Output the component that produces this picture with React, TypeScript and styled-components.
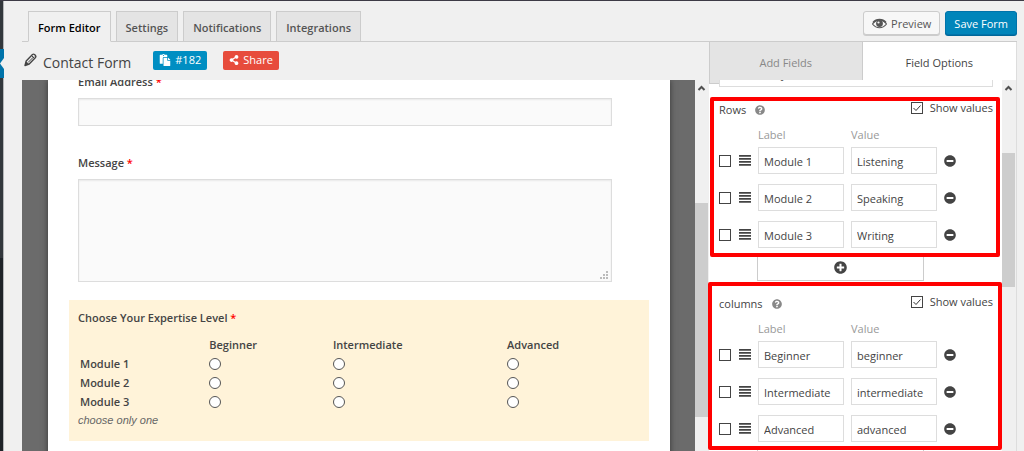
import React from "react";
import styled, { createGlobalStyle, css } from "styled-components";
import { FaShareAlt, FaMinusCircle, FaPlusCircle, FaQuestionCircle, FaPaste } from "react-icons/fa";

const Global = createGlobalStyle`
  * { box-sizing: border-box; }
  body {
    margin: 0;
    background: #f0f0f0;
    color: #444;
    font: 11px/18px "Open Sans", "Noto Sans", sans-serif;
  }
  button, input, textarea { font: inherit; color: inherit; }
`;

const Screen = styled.div`
  display: flex;
  height: 100vh;
  overflow: hidden;
  border-top: 1px solid #3d3b46;
`;

const AdminMenu = styled.div`
  flex: none;
  width: 4px;
  padding-top: 48px;
  border-right: 1px solid #b4b6b8;
  background: linear-gradient(#32373c 0 257px, #1e2328 257px);
`;

const CurrentItem = styled.svg`
  display: block;
  width: 4px;
  height: 29px;
`;

const Main = styled.main`
  flex: 1;
  min-width: 0;
  display: flex;
  flex-direction: column;
  padding: 10px 7px 0 18px;
`;

const TopBar = styled.header`
  flex: none;
  display: flex;
  align-items: flex-end;
  height: 31px;
  padding-left: 6px;
  border-bottom: 1px solid #ccc;
`;

const Tabs = styled.nav`
  display: flex;
  gap: 5px;
  margin-bottom: -1px;
  flex: 1;
`;

const Tab = styled.a<{ $active?: boolean }>`
  height: 31px;
  padding: 0 9px;
  border: 1px solid #ccc;
  background: #e4e4e4;
  color: #555;
  font-weight: 600;
  line-height: 32px;
  text-decoration: none;
  ${(p) => p.$active && css`
    background: #f0f0f0;
    border-bottom-color: #f0f0f0;
    color: #000;
  `}
`;

const Actions = styled.div`
  display: flex;
  gap: 5px;
  align-self: flex-start;
`;

const ActionButton = styled.button<{ $primary?: boolean }>`
  display: flex;
  align-items: center;
  gap: 4px;
  height: 24px;
  padding: 2px 8px 0;
  border: 1px solid #ccc;
  border-radius: 3px;
  background: #f7f7f7;
  box-shadow: 0 1px 0 #ccc;
  color: #555;
  ${(p) => p.$primary && css`
    border-color: #0073aa;
    background: #0085ba;
    box-shadow: 0 1px 0 #006799;
    color: #fff;
  `}
`;

const Workspace = styled.div`
  flex: 1;
  min-height: 0;
  display: flex;
`;

const Builder = styled.section`
  flex: 1;
  min-width: 0;
  display: flex;
  flex-direction: column;
`;

const TitleBar = styled.div`
  flex: none;
  display: flex;
  align-items: center;
  height: 38px;
`;

const Title = styled.h1`
  margin: 4px 22px 0 5px;
  font-size: 14px;
  font-weight: 400;
  line-height: 20px;
`;

const Badge = styled.button<{ $color: string }>`
  display: flex;
  align-items: center;
  gap: 4px;
  height: 19px;
  margin: -2px 16px 0 0;
  padding: 0 6px;
  border: 0;
  border-radius: 2px;
  background: ${(p) => p.$color};
  color: #fff;
`;

const ScrollArea = styled.div`
  flex: 1;
  min-height: 0;
  display: flex;
`;

const Desk = styled.div`
  flex: 1;
  min-width: 0;
  overflow: hidden;
  padding: 0 25px 0 26px;
  background: #6b6b6b;
`;

const Paper = styled.form`
  display: flow-root;
  min-height: 100%;
  padding: 0 21px 20px;
  background: #fff;
  box-shadow: 0 0 6px rgba(0, 0, 0, 0.5);
`;

const Field = styled.div<{ $selected?: boolean }>`
  padding: 9px;
  ${(p) => p.$selected && css`
    min-height: 141px;
    background: #fff3d9;
  `}
`;

const EmailField = styled(Field)`
  margin-top: -16px;
`;

const MessageField = styled(Field)`
  margin: 10px 0 9px;
`;

const FieldLabel = styled.label`
  display: block;
  font-weight: 600;
`;

const Star = styled.span`
  color: #f00;
`;

const inputLook = css`
  display: block;
  width: 95%;
  margin-top: 7px;
  border: 1px solid #ddd;
  background: #fafafa;
  box-shadow: inset 0 1px 2px rgba(0, 0, 0, 0.07);
  outline: 0;
`;

const TextInput = styled.input`
  ${inputLook}
  height: 28px;
`;

const TextBox = styled.textarea`
  ${inputLook}
  height: 103px;
  resize: vertical;
  &::-webkit-resizer {
    background:
      linear-gradient(#bbb, #bbb) 10px 5px / 2px 2px no-repeat,
      linear-gradient(#bbb, #bbb) 7px 8px / 2px 2px no-repeat,
      linear-gradient(#bbb, #bbb) 10px 8px / 2px 2px no-repeat,
      linear-gradient(#bbb, #bbb) 4px 11px / 2px 2px no-repeat,
      linear-gradient(#bbb, #bbb) 7px 11px / 2px 2px no-repeat,
      linear-gradient(#bbb, #bbb) 10px 11px / 2px 2px no-repeat;
  }
`;

const Likert = styled.table`
  width: 100%;
  margin-top: 8px;
  table-layout: fixed;
  border-collapse: collapse;
  th, td {
    height: 19px;
    padding: 0 2px;
    font-weight: 600;
    text-align: left;
    line-height: 19px;
  }
`;

const Radio = styled.input`
  appearance: none;
  display: block;
  width: 12px;
  height: 12px;
  margin: 0;
  border: 1px solid #555;
  border-radius: 50%;
  background: #fff;
`;

const Hint = styled.p`
  margin: 0;
  color: #666;
  font: italic 11px/19px "Liberation Sans", sans-serif;
`;

const Sidebar = styled.aside`
  position: relative;
  flex: none;
  width: 308px;
  display: flex;
  flex-direction: column;
  border-right: 1px solid #ddd;
  background: #fff;
`;

const SideTabs = styled.nav`
  flex: none;
  display: grid;
  grid-template-columns: 1fr 1fr;
  height: 38px;
`;

const SideTab = styled.a<{ $active?: boolean }>`
  border: solid #ccc;
  border-width: 0 1px 1px;
  background: #e4e4e4;
  color: #888;
  line-height: 41px;
  text-align: center;
  text-decoration: none;
  ${(p) => p.$active && css`
    border-color: #fff;
    background: #fff;
    color: #444;
  `}
`;

const Options = styled.div`
  flex: 1;
  min-width: 0;
  overflow: hidden;
  padding: 0 9px 0 10px;
`;

const LabelBox = styled.input`
  display: block;
  width: 100%;
  height: 27px;
  margin: -20px 0 10px;
  padding: 0 5px;
  border: 1px solid #ddd;
`;

const Group = styled.fieldset`
  min-width: 0;
  margin: 0 0 10px;
  padding: 0;
  border: 0;
`;

const GroupHead = styled.div`
  display: flex;
  align-items: center;
  gap: 9px;
  height: 26px;
`;

const ShowValues = styled.label`
  display: flex;
  align-items: center;
  gap: 7px;
  height: 22px;
  margin-left: auto;
  align-self: flex-start;
`;

const Check = styled.input`
  appearance: none;
  flex: none;
  width: 12px;
  height: 12px;
  margin: 0;
  border: 1px solid #444;
  background: #fff;
`;

const TickWrap = styled.span`
  position: relative;
  display: flex;
  svg {
    position: absolute;
    inset: 0;
    pointer-events: none;
  }
`;

const rowGrid = css`
  display: grid;
  grid-template-columns: 12px 13px 86px 86px 12px;
  column-gap: 7px;
  align-items: center;
`;

const ColumnNames = styled.div`
  ${rowGrid}
  height: 24px;
  color: #999;
  span:first-child { grid-column: 3; }
`;

const Rows = styled.div`
  display: grid;
  gap: 10px;
`;

const Row = styled.div`
  ${rowGrid}
`;

const Handle = styled.svg`
  justify-self: end;
`;

const Cell = styled.input`
  width: 86px;
  height: 27px;
  padding: 1px 5px 0;
  border: 1px solid #ddd;
  background: #fff;
  outline: 0;
`;

const IconButton = styled.button`
  display: flex;
  padding: 0;
  border: 0;
  background: none;
  color: #444;
`;

const AddButton = styled.button`
  display: flex;
  align-items: center;
  justify-content: center;
  width: 167px;
  height: 28px;
  margin: 5px 0 0 38px;
  border: 1px solid #ccc;
  background: #fff;
  color: #444;
`;

const Track = styled.div`
  flex: none;
  width: 14px;
  display: flex;
  flex-direction: column;
  background: #f0f0f0;
`;

const Thumb = styled.div<{ $top: number; $size: number }>`
  width: 13px;
  height: ${(p) => p.$size}px;
  margin-top: ${(p) => p.$top}px;
  background: #cdcdcd;
`;

const Callout = styled.div<{ $top: number; $height: number; $grow?: boolean }>`
  position: absolute;
  top: ${(p) => p.$top}px;
  left: ${(p) => (p.$grow ? -1 : 1)}px;
  right: ${(p) => (p.$grow ? 14 : 16)}px;
  height: ${(p) => p.$height}px;
  border: 4px solid #f00;
  border-radius: 2px;
  pointer-events: none;
`;

function Scrollbar({ top, size }: { top: number; size: number }) {
  return (
    <Track>
      <svg width="13" height="16" viewBox="0 0 13 16" fill="none" stroke="#505050" strokeWidth="2">
        <path d="M3.5 10 6.5 7l3 3" />
      </svg>
      <Thumb $top={top} $size={size} />
    </Track>
  );
}

function OptionGroup({ title, rows }: { title: string; rows: [string, string][] }) {
  return (
    <Group aria-label={title}>
      <GroupHead>
        <span>{title}</span>
        <FaQuestionCircle size={10} color="#888" />
        <ShowValues>
          <TickWrap>
            <Check type="checkbox" defaultChecked />
            <svg width="12" height="12" viewBox="0 0 12 12" fill="none" stroke="#333">
              <path d="M2.5 6 5 8.5l4.5-5" />
            </svg>
          </TickWrap>
          Show values
        </ShowValues>
      </GroupHead>
      <ColumnNames>
        <span>Label</span>
        <span>Value</span>
      </ColumnNames>
      <Rows>
        {rows.map(([label, value]) => (
          <Row key={label}>
            <Check type="checkbox" aria-label={`Default ${label}`} />
            <Handle width="12" height="11" viewBox="0 0 12 11" fill="#444">
              <path d="M0 0h12v1.700H0zM0 3h12v1.700H0zM0 6h12v1.700H0zM0 9h12v1.700H0z" />
            </Handle>
            <Cell aria-label="Label" defaultValue={label} />
            <Cell aria-label="Value" defaultValue={value} />
            <IconButton type="button" aria-label="Remove">
              <FaMinusCircle size={12} />
            </IconButton>
          </Row>
        ))}
      </Rows>
      <AddButton type="button" aria-label="Add">
        <FaPlusCircle size={13} />
      </AddButton>
    </Group>
  );
}

export default function App() {
  return (
    <>
      <Global />
      <Screen>
        <AdminMenu>
          <CurrentItem viewBox="0 0 4 29">
            <path d="M0 0h4v29H0z" fill="#0073aa" />
            <path d="M4 9v11L0 14.5z" fill="#f0f0f0" />
          </CurrentItem>
        </AdminMenu>
        <Main>
          <TopBar>
            <Tabs>
              <Tab href="#editor" $active>Form Editor</Tab>
              <Tab href="#settings">Settings</Tab>
              <Tab href="#notifications">Notifications</Tab>
              <Tab href="#integrations">Integrations</Tab>
            </Tabs>
            <Actions>
              <ActionButton type="button">
                <svg width="15" height="12" viewBox="0 0 15 12">
                  <path d="M.5 6C4.500 .5 10.500 .5 14.500 6 10.500 11 4.500 11 .5 6z" fill="#f7f7f7" stroke="#555" strokeWidth="1.200" />
                  <path d="M1 4.500C4.500 .5 10.500 .5 14 4.500" fill="none" stroke="#555" strokeWidth="1.500" />
                  <circle cx="7.500" cy="5.500" r="3.400" fill="#555" />
                  <circle cx="6.500" cy="4.500" r="1.100" fill="#f7f7f7" />
                </svg>
                Preview
              </ActionButton>
              <ActionButton type="button" $primary>Save Form</ActionButton>
            </Actions>
          </TopBar>
          <Workspace>
            <Builder>
              <TitleBar>
                <svg width="16" height="18" viewBox="0 0 16 18" strokeLinejoin="round">
                  <path d="M3 13.500 4.200 9 10.500 2.500q1-.8 2 0l1 1q.8 1 0 2L7.200 12z" fill="#f0f0f0" stroke="#444" strokeWidth="1.400" />
                  <path d="M3 13.500 4.200 9.500 6.800 12z" fill="#444" />
                  <path d="M6 10.500 12 4.500M9.500 3.500l3 3" fill="none" stroke="#444" />
                </svg>
                <Title>Contact Form</Title>
                <Badge type="button" $color="#008ec2"><FaPaste size={12} />#182</Badge>
                <Badge type="button" $color="#e74c3c"><FaShareAlt size={10} />Share</Badge>
              </TitleBar>
              <ScrollArea>
                <Desk>
                  <Paper>
                    <EmailField>
                      <FieldLabel htmlFor="email">Email Address <Star>*</Star></FieldLabel>
                      <TextInput id="email" type="email" />
                    </EmailField>
                    <MessageField>
                      <FieldLabel htmlFor="message">Message <Star>*</Star></FieldLabel>
                      <TextBox id="message" />
                    </MessageField>
                    <Field $selected>
                      <FieldLabel as="div">Choose Your Expertise Level <Star>*</Star></FieldLabel>
                      <Likert>
                        <colgroup>
                          <col style={{ width: "23%" }} />
                          <col style={{ width: "22%" }} />
                          <col style={{ width: "31%" }} />
                          <col style={{ width: "24%" }} />
                        </colgroup>
                        <thead>
                          <tr><td /><th>Beginner</th><th>Intermediate</th><th>Advanced</th></tr>
                        </thead>
                        <tbody>
                          {["Module 1", "Module 2", "Module 3"].map((m) => (
                            <tr key={m}>
                              <th>{m}</th>
                              {["Beginner", "Intermediate", "Advanced"].map((level) => (
                                <td key={level}><Radio type="radio" name={m} aria-label={`${m} ${level}`} /></td>
                              ))}
                            </tr>
                          ))}
                        </tbody>
                      </Likert>
                      <Hint>choose only one</Hint>
                    </Field>
                  </Paper>
                </Desk>
                <Scrollbar top={107} size={214} />
              </ScrollArea>
            </Builder>
            <Sidebar>
              <SideTabs>
                <SideTab href="#add">Add Fields</SideTab>
                <SideTab href="#options" $active>Field Options</SideTab>
              </SideTabs>
              <ScrollArea>
                <Options>
                  <LabelBox aria-label="Description" defaultValue="choose only one" />
                  <OptionGroup title="Rows" rows={[["Module 1", "Listening"], ["Module 2", "Speaking"], ["Module 3", "Writing"]]} />
                  <OptionGroup title="columns" rows={[["Beginner", "beginner"], ["Intermediate", "intermediate"], ["Advanced", "advanced"]]} />
                </Options>
                <Scrollbar top={57} size={134} />
              </ScrollArea>
              <Callout $top={55} $height={160} />
              <Callout $top={240} $height={168} $grow />
            </Sidebar>
          </Workspace>
        </Main>
      </Screen>
    </>
  );
}
